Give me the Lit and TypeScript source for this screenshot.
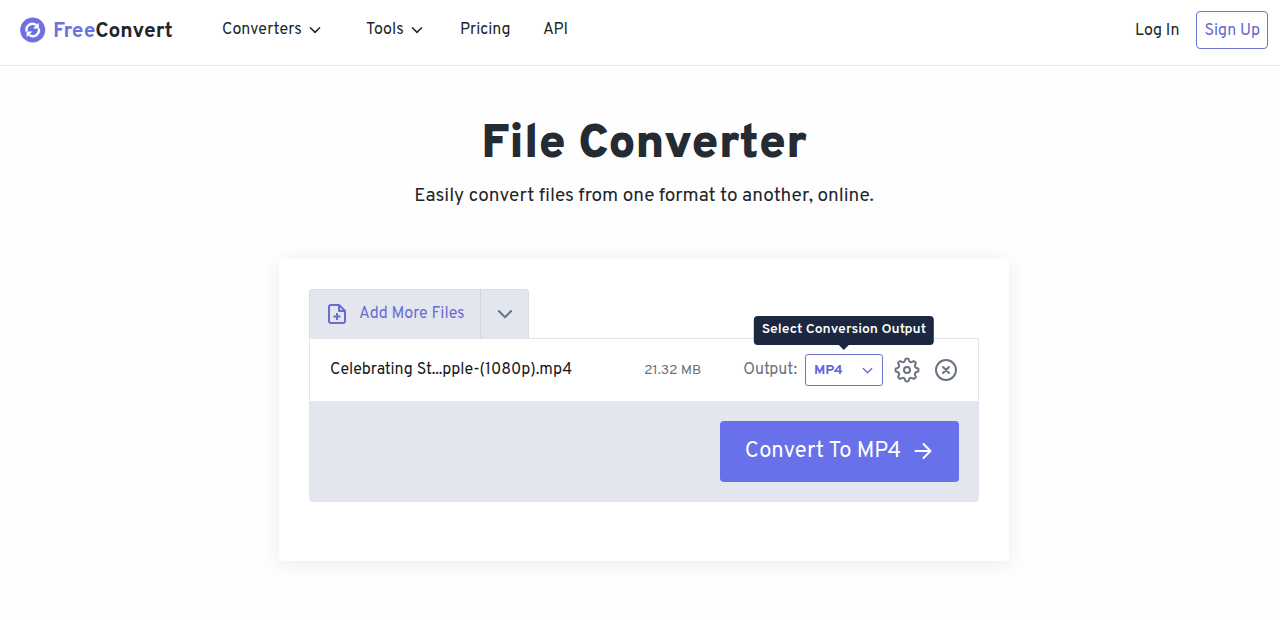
import { LitElement, html, css, svg } from "lit";
import { customElement, property, state } from "lit/decorators.js";

const chevron = (size: number, width = 2) => html`
  <svg class="chevron" width=${size} height=${size} viewBox="0 0 12 12" fill="none"
    stroke="currentColor" stroke-width=${width} stroke-linecap="round" stroke-linejoin="round" aria-hidden="true">
    <path d="M1.4 3.8 6 8.4l4.6-4.6"></path>
  </svg>`;

const gearPath = (() => {
  const teeth = 8;
  const step = (Math.PI * 2) / teeth;
  const at = (r: number, a: number) =>
    `${(12 + r * Math.sin(a)).toFixed(2)} ${(12 - r * Math.cos(a)).toFixed(2)}`;
  let d = "";
  for (let i = 0; i < teeth; i++) {
    const a = i * step;
    d += `${i ? "L" : "M"}${at(10.4, a - 0.13)}Q${at(11, a)} ${at(10.4, a + 0.13)}`;
    d += `L${at(8.9, a + 0.21)}Q${at(7.2, a + step / 2)} ${at(8.9, a + step - 0.21)}`;
  }
  return d + "Z";
})();

@customElement("site-header")
export class SiteHeader extends LitElement {
  static styles = css`
    :host { display: block; }
    .bar {
      display: flex;
      box-sizing: border-box;
      height: 66px;
      padding: 0 12px 6px 20px;
      align-items: center;
      background: #fff;
      border-bottom: 1px solid #ebebed;
      font-size: 16px;
      line-height: 20px;
      color: #212529;
    }
    a { color: inherit; text-decoration: none; }
    .brand {
      display: flex;
      flex: 0 0 202px;
      align-items: center;
      gap: 7px;
      font-size: 21px;
      line-height: 26px;
      font-weight: 700;
    }
    .wordmark { padding-top: 4px; }
    .free { color: #6f72de; }
    .nav {
      display: grid;
      flex: 1;
      grid-template-columns: 144px 94px 83px auto;
    }
    .menu {
      display: flex;
      align-items: center;
      gap: 7px;
      padding: 0;
      border: 0;
      background: none;
      font: inherit;
      color: inherit;
    }
    .account { display: flex; align-items: center; gap: 17px; }
    .login { padding-top: 2px; }
    .signup {
      padding: 9px 7px 7px;
      border: 1px solid #6f72cc;
      border-radius: 4px;
      color: #6468cc;
    }
  `;

  render() {
    return html`
      <header class="bar">
        <a class="brand" href="#">
          <svg width="26" height="26" viewBox="0 0 26 26" fill="none" aria-hidden="true">
            <circle cx="12.7" cy="13" r="12.5" fill="#6f6fe4"></circle>
            <path d="M6.600 14.400a6.200 6.200 0 0 1 9.800-6.300" stroke="#fff" stroke-width="2.400"></path>
            <path d="M18.800 5.800v5.800h-5.800z" fill="#fff"></path>
            <path d="M18.800 11.600a6.200 6.200 0 0 1-9.800 6.300" stroke="#fff" stroke-width="2.400"></path>
            <path d="M6.600 20.200v-5.800h5.800z" fill="#fff"></path>
          </svg>
          <span class="wordmark"><span class="free">Free</span>Convert</span>
        </a>
        <nav class="nav" aria-label="Main">
          <button class="menu" type="button">Converters ${chevron(12, 1.5)}</button>
          <button class="menu" type="button">Tools ${chevron(12, 1.5)}</button>
          <a href="#">Pricing</a>
          <a href="#">API</a>
        </nav>
        <div class="account">
          <a class="login" href="#">Log In</a>
          <a class="signup" href="#">Sign Up</a>
        </div>
      </header>
    `;
  }
}

@customElement("file-row")
export class FileRow extends LitElement {
  @property() name = "";
  @property() size = "";
  @property() format = "MP4";

  static styles = css`
    :host { display: block; }
    .row {
      display: flex;
      align-items: center;
      height: 62px;
      padding: 0 21px 0 20px;
      border: 1px solid #e3e4ea;
      border-bottom: 0;
      color: #6b7280;
    }
    .name { flex: 1; font-size: 16px; color: #16181c; }
    .size { font-size: 14px; margin-right: 42px; }
    .label { font-size: 16px; margin-right: 8px; }
    .picker { position: relative; color: #6366d8; }
    .select {
      display: block;
      appearance: none;
      width: 78px;
      height: 32px;
      padding: 0 8px;
      border: 1px solid #6f72cc;
      border-radius: 3px;
      background: #fff;
      font-family: inherit;
      font-size: 14px;
      font-weight: 700;
      color: inherit;
    }
    .picker .chevron {
      position: absolute;
      top: 11px;
      right: 10px;
      pointer-events: none;
    }
    .tip {
      position: absolute;
      bottom: 41px;
      left: 50%;
      transform: translateX(-50%);
      padding: 4px 8px 5px;
      border-radius: 4px;
      background: #1c2740;
      font-size: 14px;
      line-height: 20px;
      font-weight: 600;
      white-space: nowrap;
      color: #fff;
    }
    .tip::after {
      content: "";
      position: absolute;
      top: 100%;
      left: 50%;
      margin-left: -5px;
      border: 5px solid transparent;
      border-top-color: #1c2740;
      border-bottom: 0;
    }
    .icon {
      display: block;
      padding: 0;
      border: 0;
      background: none;
      color: inherit;
    }
    .icon svg { display: block; }
    .settings { margin: 0 15px 0 11px; }
  `;

  private pick(e: Event) {
    const format = (e.target as HTMLSelectElement).value;
    this.dispatchEvent(new CustomEvent("format-change", { detail: format }));
  }

  render() {
    return html`
      <div class="row">
        <span class="name">${this.name}</span>
        <span class="size">${this.size}</span>
        <label class="label" for="output">Output:</label>
        <div class="picker">
          <select class="select" id="output" aria-describedby="tip" @change=${this.pick}>
            <option>${this.format}</option>
          </select>
          ${chevron(11, 1.4)}
          <div class="tip" id="tip" role="tooltip">Select Conversion Output</div>
        </div>
        <button class="icon settings" type="button" aria-label="Settings">
          <svg width="26" height="26" viewBox="0 0 24 24" fill="none" stroke="currentColor"
            stroke-width="1.8" stroke-linejoin="round">
            ${svg`<path d=${gearPath}></path>`}
            <circle cx="12" cy="12" r="2.8"></circle>
          </svg>
        </button>
        <button class="icon" type="button" aria-label="Remove file">
          <svg width="22" height="22" viewBox="0 0 22 22" fill="none" stroke="currentColor" stroke-width="2"
            stroke-linecap="round">
            <circle cx="11" cy="11" r="10"></circle>
            <path d="m8 8 6 6m0-6-6 6"></path>
          </svg>
        </button>
      </div>
    `;
  }
}

@customElement("app-root")
export class AppRoot extends LitElement {
  @state() private format = "MP4";

  static styles = css`
    :host {
      display: block;
      min-height: 100vh;
      background: #fefefe;
      font-family: Overpass, Roboto, "Open Sans", sans-serif;
      color: #212529;
    }
    .main { padding: 50px 0 40px 8px; }
    .title {
      margin: 0;
      font-size: 48px;
      line-height: 58px;
      font-weight: 900;
      text-align: center;
      color: #252b33;
    }
    .lead {
      margin: 8px 0 0;
      font-size: 19px;
      line-height: 28px;
      text-align: center;
    }
    .card {
      box-sizing: border-box;
      max-width: 730px;
      margin: 49px auto 0;
      padding: 30px 30px 59px;
      border-radius: 4px;
      background: #fff;
      box-shadow: 0 3px 22px rgba(0, 0, 0, 0.08);
    }
    .tab {
      display: inline-flex;
      vertical-align: top;
      box-sizing: border-box;
      height: 49px;
      border: 1px solid #dcdce2;
      border-bottom: 0;
      border-radius: 4px 4px 0 0;
      background: #e4e6ef;
    }
    .add, .more {
      display: flex;
      align-items: center;
      border: 0;
      background: none;
      font: inherit;
    }
    .add {
      width: 170px;
      padding: 0 0 0 18px;
      gap: 13px;
      font-size: 16px;
      color: #6a6dd0;
    }
    .more {
      width: 48px;
      justify-content: center;
      padding: 0;
      border-left: 1px solid #d5d6dd;
      color: #68788c;
    }
    .actions {
      display: flex;
      justify-content: flex-end;
      padding: 20px;
      border-radius: 0 0 4px 4px;
      background: #e4e6ef;
    }
    .convert {
      display: flex;
      align-items: center;
      justify-content: center;
      gap: 13px;
      width: 239px;
      height: 61px;
      padding: 0 2px 2px 0;
      border: 0;
      border-radius: 4px;
      background: #6870ea;
      font: inherit;
      font-size: 22px;
      color: #fff;
    }
    .caption { padding-top: 2px; }
  `;

  render() {
    return html`
      <site-header></site-header>
      <main class="main">
        <h1 class="title">File Converter</h1>
        <p class="lead">Easily convert files from one format to another, online.</p>
        <section class="card">
          <div class="tab">
            <button class="add" type="button">
              <svg width="18" height="20" viewBox="0 0 18 20" fill="none" stroke="currentColor"
                stroke-width="2" stroke-linejoin="round" aria-hidden="true">
                <path d="M11 1H3a2 2 0 0 0-2 2v14a2 2 0 0 0 2 2h12a2 2 0 0 0 2-2V7z"></path>
                <path d="M11 1v6h6M9 9v7M5.500 12.500h7"></path>
              </svg>
              Add More Files
            </button>
            <button class="more" type="button" aria-label="More sources">${chevron(16, 1.6)}</button>
          </div>
          <file-row name="Celebrating St...pple-(1080p).mp4" size="21.32 MB" .format=${this.format}
            @format-change=${(e: CustomEvent) => (this.format = e.detail)}></file-row>
          <div class="actions">
            <button class="convert" type="button">
              <span class="caption">Convert To ${this.format}</span>
              <svg width="18" height="18" viewBox="0 0 18 18" fill="none" stroke="currentColor" stroke-width="2"
                stroke-linecap="round" stroke-linejoin="round" aria-hidden="true">
                <path d="M1.500 9h15M9.500 2l7 7-7 7"></path>
              </svg>
            </button>
          </div>
        </section>
      </main>
    `;
  }
}
